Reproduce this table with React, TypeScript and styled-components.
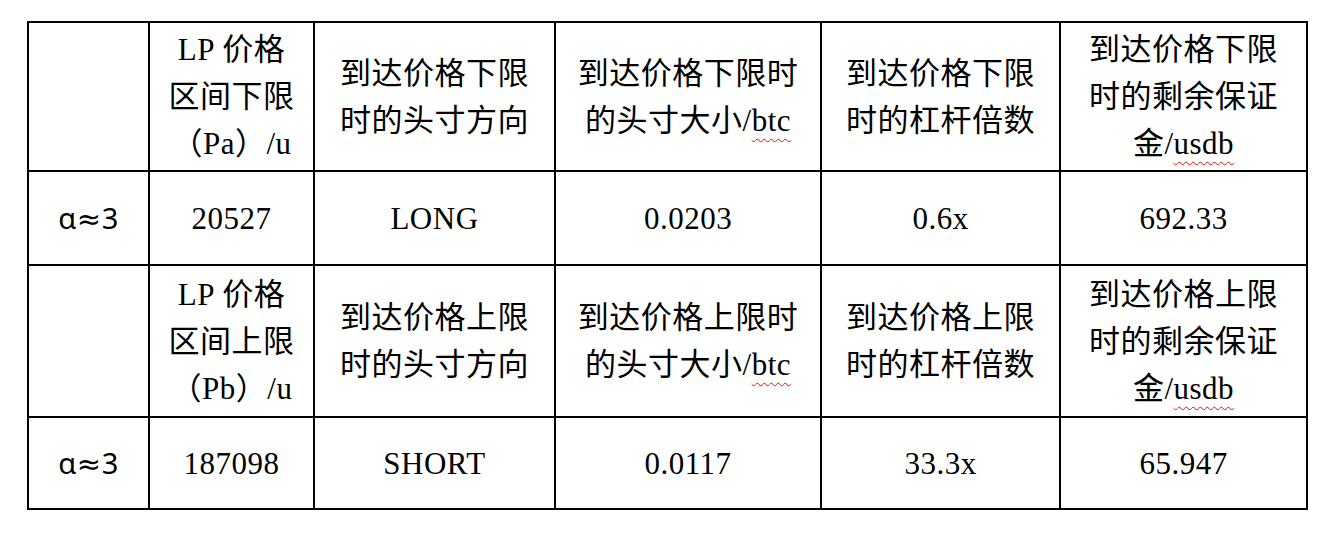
import React from "react";
import styled, { createGlobalStyle } from "styled-components";

const Global = createGlobalStyle`
  html, body { margin: 0; padding: 0; background: #fff; }
  body { font-family: "Liberation Serif", "Noto Sans CJK SC", serif; color: #000; }
`;

const Page = styled.div`
  padding: 21px 0 0 27px;
`;

const Table = styled.table`
  border-collapse: collapse;
  table-layout: fixed;
  width: 1281px;
`;

const Cell = styled.td<{ $h: number }>`
  border: 2px solid #000;
  height: ${(p) => p.$h}px;
  padding: 0;
  text-align: center;
  vertical-align: middle;
  font-family: "Liberation Serif", "Noto Sans CJK SC", serif;
  font-size: 31px;
  line-height: 47px;
  letter-spacing: 0.5px;
`;

const Line = styled.span`
  display: block;
  white-space: nowrap;
`;

const Alpha = styled.span`
  font-family: "Noto Sans", "DejaVu Sans", sans-serif;
  font-size: 29px;
`;

const Spell = styled.span`
  text-decoration: underline wavy #e01010;
  text-decoration-thickness: 1px;
  text-underline-offset: 7px;
`;

const widths = [121, 165, 241, 266, 239, 247];

type Content = React.ReactNode[];

const header = (bound: "下" | "上", p: "Pa" | "Pb"): Content[] => [
  [],
  ["LP 价格", `区间${bound}限`, `（${p}）/u`],
  [`到达价格${bound}限`, "时的头寸方向"],
  [
    `到达价格${bound}限时`,
    <>
      的头寸大小/<Spell>btc</Spell>
    </>,
  ],
  [`到达价格${bound}限`, "时的杠杆倍数"],
  [
    `到达价格${bound}限`,
    "时的剩余保证",
    <>
      金/<Spell>usdb</Spell>
    </>,
  ],
];

const values = (v: string[]): Content[] => [
  [<Alpha>α≈3</Alpha>],
  ...v.map((s) => [s]),
];

const rows: { h: number; cells: Content[] }[] = [
  { h: 147, cells: header("下", "Pa") },
  { h: 92, cells: values(["20527", "LONG", "0.0203", "0.6x", "692.33"]) },
  { h: 150, cells: header("上", "Pb") },
  { h: 90, cells: values(["187098", "SHORT", "0.0117", "33.3x", "65.947"]) },
];

export default function App() {
  return (
    <>
      <Global />
      <Page>
        <Table>
          <colgroup>
            {widths.map((w, i) => (
              <col key={i} style={{ width: w }} />
            ))}
          </colgroup>
          <tbody>
            {rows.map((r, ri) => (
              <tr key={ri}>
                {r.cells.map((c, ci) => (
                  <Cell key={ci} $h={r.h}>
                    {c.map((l, li) => (
                      <Line key={li}>{l}</Line>
                    ))}
                  </Cell>
                ))}
              </tr>
            ))}
          </tbody>
        </Table>
      </Page>
    </>
  );
}
